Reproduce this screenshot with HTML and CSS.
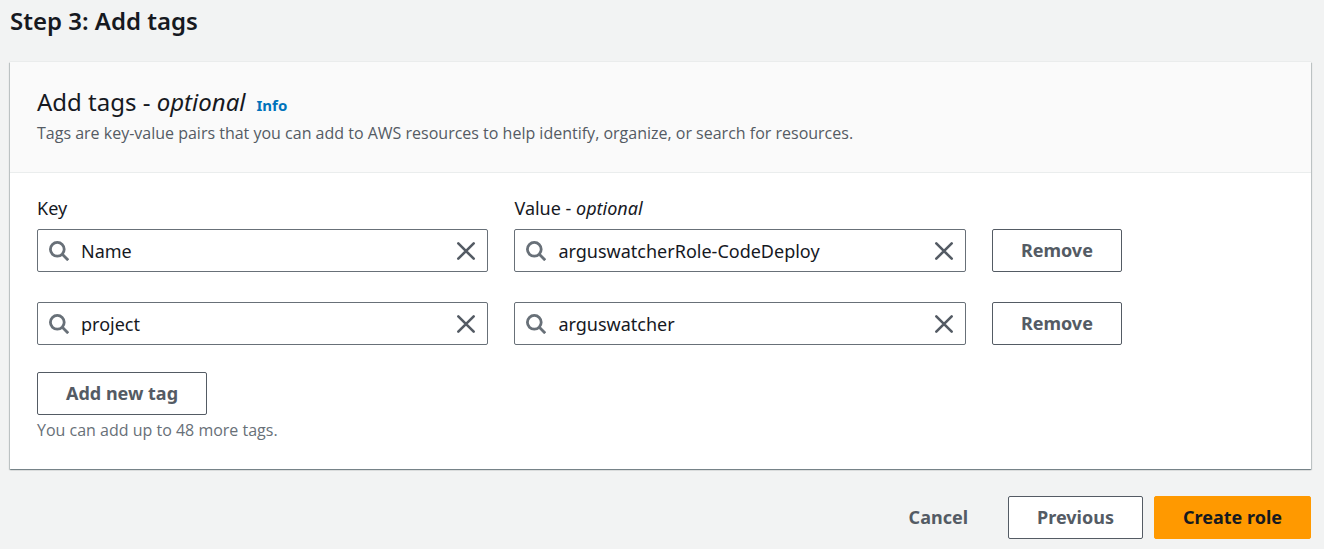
FILE: index.html
```html
<!DOCTYPE html>
<html lang="en">
<head>
<meta charset="utf-8">
<meta name="viewport" content="width=device-width, initial-scale=1">
<title>Step 3: Add tags</title>
<link rel="stylesheet" href="styles.css">
</head>
<body>
<svg class="sprite" aria-hidden="true">
  <symbol id="search" viewBox="0 0 20 20"><circle cx="8.3" cy="8.3" r="6.9"/><path d="M13.3 13.3L19.2 19.2"/></symbol>
  <symbol id="close" viewBox="0 0 20 20"><path d="M2.3 2.3L17.7 17.7M17.7 2.3L2.3 17.7"/></symbol>
</svg>
<form class="page">
  <h1 class="page-title">Step 3: Add tags</h1>
  <section class="card">
    <header class="card-header">
      <div class="heading-row">
        <h2 class="card-title">Add tags - <em>optional</em></h2>
        <a class="info" href="#info">Info</a>
      </div>
      <p class="description">Tags are key-value pairs that you can add to AWS resources to help identify, organize, or search for resources.</p>
    </header>
    <div class="card-body">
      <div class="tag-row labels">
        <label for="key-1">Key</label>
        <label for="value-1">Value - <em>optional</em></label>
      </div>
      <div class="tag-rows">
        <div class="tag-row">
          <div class="field">
            <svg class="icon-search" aria-hidden="true"><use href="#search"/></svg>
            <input id="key-1" type="text" value="Name">
            <button class="clear" type="button" aria-label="Clear key"><svg class="icon-close"><use href="#close"/></svg></button>
          </div>
          <div class="field">
            <svg class="icon-search" aria-hidden="true"><use href="#search"/></svg>
            <input id="value-1" type="text" value="arguswatcherRole-CodeDeploy">
            <button class="clear" type="button" aria-label="Clear value"><svg class="icon-close"><use href="#close"/></svg></button>
          </div>
          <button class="button" type="button">Remove</button>
        </div>
        <div class="tag-row">
          <div class="field">
            <svg class="icon-search" aria-hidden="true"><use href="#search"/></svg>
            <input aria-label="Key" type="text" value="project">
            <button class="clear" type="button" aria-label="Clear key"><svg class="icon-close"><use href="#close"/></svg></button>
          </div>
          <div class="field">
            <svg class="icon-search" aria-hidden="true"><use href="#search"/></svg>
            <input aria-label="Value - optional" type="text" value="arguswatcher">
            <button class="clear" type="button" aria-label="Clear value"><svg class="icon-close"><use href="#close"/></svg></button>
          </div>
          <button class="button" type="button">Remove</button>
        </div>
      </div>
      <button class="button" type="button">Add new tag</button>
      <p class="hint">You can add up to 48 more tags.</p>
    </div>
  </section>
  <footer class="actions">
    <button class="button link" type="button">Cancel</button>
    <button class="button" type="button">Previous</button>
    <button class="button primary" type="submit">Create role</button>
  </footer>
</form>
</body>
</html>
```
FILE: styles.css
```css
* { box-sizing: border-box; }
body {
  margin: 0;
  background: #f2f3f3;
  color: #16191f;
  font: 18px/28px "Noto Sans", "Open Sans", sans-serif;
}
h1, h2, p { margin: 0; }
.sprite { position: absolute; width: 0; height: 0; }
.page { padding: 5px 13px 10px 10px; }
.page-title { font-size: 24px; line-height: 32px; font-weight: 600; }
.card {
  margin-top: 25px;
  background: #fff;
  box-shadow: 0 1px 1px 0 rgba(0, 28, 36, .3), 1px 1px 1px 0 rgba(0, 28, 36, .15), -1px 1px 1px 0 rgba(0, 28, 36, .15), 0 0 1px 0 rgba(0, 28, 36, .2);
}
.card-header {
  padding: 24px 27px;
  background: #fafafa;
  border-bottom: 1px solid #eaeded;
}
.heading-row { display: flex; align-items: baseline; gap: 11px; }
.card-title { font-size: 24px; line-height: 32px; font-weight: 400; }
.info {
  color: #0073bb;
  font-size: 15px;
  font-weight: 700;
  text-decoration: none;
}
.description, .hint { font-family: "Open Sans", "Noto Sans", sans-serif; font-size: 16px; }
.description { color: #545b64; line-height: 29px; }
.card-body { padding: 21px 27px 29px; }
.tag-rows { display: grid; gap: 30px; margin-bottom: 27px; }
.tag-row {
  display: grid;
  grid-template-columns: 17fr 17fr 11fr;
  column-gap: 26px;
  justify-items: start;
}
.labels { margin-bottom: 7px; }
.field {
  display: flex;
  align-items: center;
  width: 100%;
  height: 43px;
  padding: 0 11px;
  gap: 12px;
  border: 1px solid #687078;
  border-radius: 2px;
  background: #fff;
}
.field input {
  flex: 1;
  min-width: 0;
  padding: 0;
  border: 0;
  outline: 0;
  background: none;
  color: inherit;
  font: inherit;
}
.clear { display: flex; padding: 0; border: 0; background: none; cursor: pointer; }
.icon-search { flex: none; width: 20px; height: 20px; fill: none; stroke: #687078; stroke-width: 2.8; }
.icon-close { width: 20px; height: 20px; fill: none; stroke: #545b64; stroke-width: 2.6; stroke-linecap: round; }
.button {
  height: 43px;
  padding: 0 28px 2px;
  border: 1px solid #545b64;
  border-radius: 2px;
  background: #fff;
  color: #545b64;
  font: 700 18px/26px "Noto Sans", "Open Sans", sans-serif;
  cursor: pointer;
}
.hint { color: #687078; line-height: 20px; margin-top: 5px; }
.actions { display: flex; justify-content: flex-end; gap: 11px; margin-top: 27px; }
.link { background: none; border-color: transparent; }
.primary { background: #ff9900; border-color: #ff9900; color: #16191f; }
```
